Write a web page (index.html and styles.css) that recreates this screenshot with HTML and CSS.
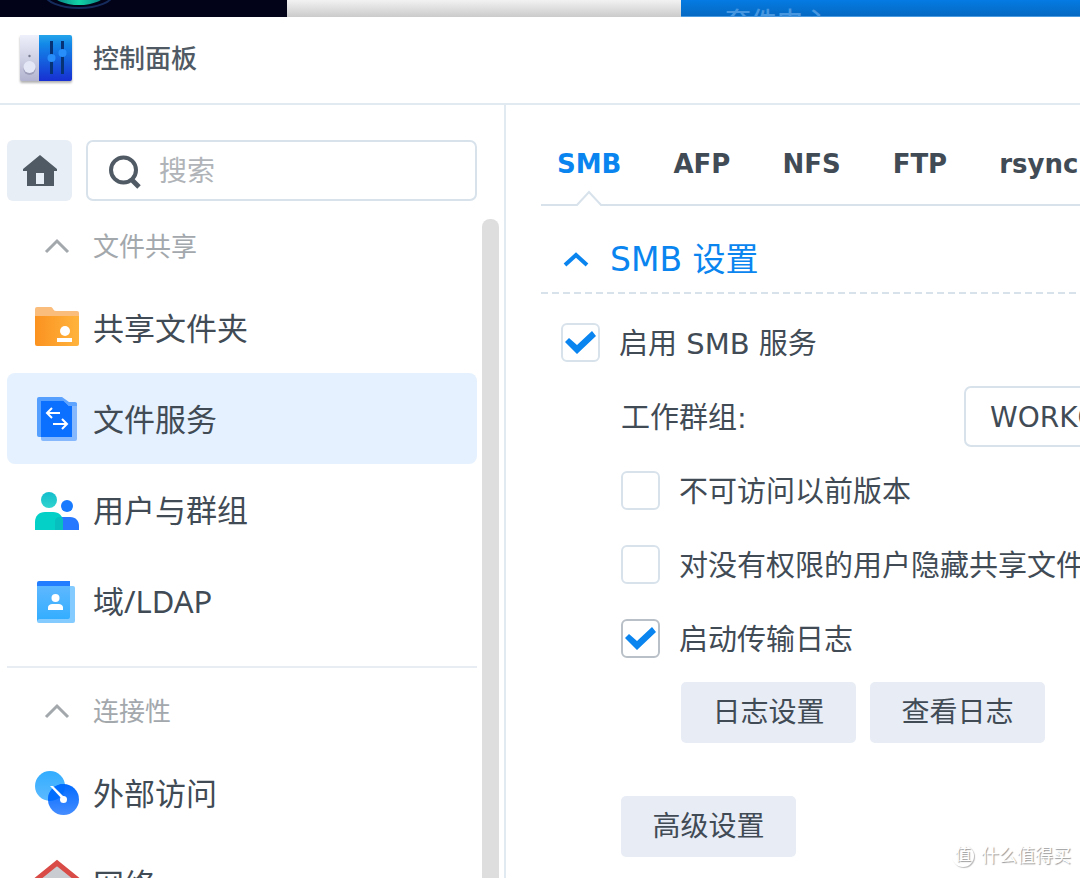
FILE: index.html
```html
<!DOCTYPE html>
<html lang="zh-CN">
<head>
    <meta charset="UTF-8">
    <meta name="viewport" content="width=device-width, initial-scale=1.0">
    <title>控制面板</title>
    <link rel="stylesheet" href="styles.css">
</head>
<body>

<div class="desktop">
    <div class="wallpaper">
        <svg width="287" height="17" viewBox="0 0 287 17">
            <defs>
                <linearGradient id="glow" x1="0" x2="1"><stop offset="0" stop-color="#087b82"/><stop offset=".5" stop-color="#12d3a5"/><stop offset="1" stop-color="#087b82"/></linearGradient>
            </defs>
            <ellipse cx="79" cy="-6" rx="34" ry="14" fill="none" stroke="#152b5c" stroke-width="2"/>
            <ellipse cx="79" cy="-6" rx="26" ry="11" fill="url(#glow)"/>
        </svg>
    </div>
    <div class="window-behind"></div>
    <div class="package-center">套件中心</div>
</div>

<div class="window">
    <header class="titlebar">
        <svg class="app-icon" width="54" height="54" viewBox="0 0 54 54">
            <defs>
                <linearGradient id="appLeft" x2="0" y2="1"><stop offset="0" stop-color="#eef0fb"/><stop offset="1" stop-color="#b2b3cf"/></linearGradient>
                <linearGradient id="appRight" x2="0" y2="1"><stop offset="0" stop-color="#25a5ea"/><stop offset=".2" stop-color="#1388e8"/><stop offset="1" stop-color="#172fd2"/></linearGradient>
            </defs>
            <path d="M1 3h20v46H3a2 2 0 0 1-2-2z" fill="url(#appLeft)"/>
            <path d="M20 3h31a2 2 0 0 1 2 2v42a2 2 0 0 1-2 2H20z" fill="url(#appRight)"/>
            <circle cx="10.500" cy="24" r="1.200" fill="#777b90"/>
            <circle cx="10.500" cy="37" r="6" fill="#9ea0bb"/>
            <circle cx="10.500" cy="35" r="6" fill="#e4e7f6"/>
            <path d="M32.500 9v33M43.500 9v33" stroke="#063276" stroke-width="3"/>
            <circle cx="32.500" cy="26" r="4" fill="#288ffa"/>
            <circle cx="43.500" cy="21" r="4" fill="#288ffa"/>
        </svg>
        <h1>控制面板</h1>
    </header>

    <div class="body">
        <aside class="sidebar">
            <div class="search-row">
                <button class="home" type="button" aria-label="主页">
                    <svg width="36" height="32" viewBox="0 0 36 32">
                        <path fill-rule="evenodd" fill="#505a64" d="M18 0L35 14v2h-3v15H5V16H1v-2zM14 18v11h8V18z"/>
                    </svg>
                </button>
                <label class="search">
                    <svg width="34" height="36" viewBox="0 0 34 36">
                        <circle cx="15.500" cy="16" r="12.500" fill="none" stroke="#505a64" stroke-width="4"/>
                        <path d="M24 26l7 7" stroke="#505a64" stroke-width="5"/>
                    </svg>
                    <input type="search" placeholder="搜索" aria-label="搜索">
                </label>
            </div>

            <div class="scroll-area">
                <nav class="nav">
                    <button class="group" type="button">
                        <svg width="44" height="24" viewBox="0 0 44 24"><path d="M11 18L22 7l11 11" fill="none" stroke="#a3a8ad" stroke-width="3"/></svg>
                        文件共享
                    </button>
                    <a class="item" href="#share">
                        <svg width="44" height="44" viewBox="0 0 44 44">
                            <defs><linearGradient id="folder"><stop offset="0" stop-color="#fb9220"/><stop offset="1" stop-color="#ffb43d"/></linearGradient></defs>
                            <path d="M0 3a2 2 0 0 1 2-2h14c2 0 2 4 5 4h21a2 2 0 0 1 2 2v6H0z" fill="#fbbd7c"/>
                            <path d="M0 10h44v28a2 2 0 0 1-2 2H2a2 2 0 0 1-2-2z" fill="url(#folder)"/>
                            <circle cx="30" cy="25" r="5" fill="#fff"/>
                            <path d="M22 32h15v4H22z" fill="#fff"/>
                        </svg>
                        共享文件夹
                    </a>
                    <a class="item active" href="#service">
                        <svg width="44" height="44" viewBox="0 0 44 44">
                            <path d="M2 2a2 2 0 0 1 2-2h22l10 8v32H4a2 2 0 0 1-2-2z" fill="#559fff"/>
                            <path d="M6 4h34a2 2 0 0 1 2 2v36a2 2 0 0 1-2 2H8a2 2 0 0 1-2-2z" fill="#86b8fd"/>
                            <path d="M26 0h16v6H34z" fill="#e5f1fe"/>
                            <path d="M6 4h23l5 5h3v31H6z" fill="#0b70ff"/>
                            <path d="M24 0h3l7 5h6a2 2 0 0 1 2 2v2h-8z" fill="#5fa5ff"/>
                            <path d="M25 16H12M17 11l-5 5 5 5M18 27h14M27 22l5 5-5 5" fill="none" stroke="#fff" stroke-width="2"/>
                        </svg>
                        文件服务
                    </a>
                    <a class="item" href="#users">
                        <svg width="44" height="44" viewBox="0 0 44 44">
                            <defs><linearGradient id="user" x2="0" y2="1"><stop offset="0" stop-color="#13bdcc"/><stop offset="1" stop-color="#30d4ce"/></linearGradient></defs>
                            <circle cx="14" cy="12" r="8" fill="url(#user)"/>
                            <circle cx="32" cy="18" r="6" fill="#177aff"/>
                            <path d="M20 42V29h15c6 0 9 4 9 9v4z" fill="#2878ff"/>
                            <path d="M0 42V34c0-6 4-10 10-10h8c6 0 10 4 10 10v8z" fill="#04d0c8"/>
                            <path d="M20 42V34c0-3 1-5 6-5 1 1 2 3 2 5v8z" fill="#07bfbf"/>
                        </svg>
                        用户与群组
                    </a>
                    <a class="item" href="#ldap">
                        <svg width="44" height="44" viewBox="0 0 44 44">
                            <defs><linearGradient id="book" x2="0" y2="1"><stop offset="0" stop-color="#5eb8ff"/><stop offset="1" stop-color="#32adff"/></linearGradient></defs>
                            <path d="M2 4a2 2 0 0 1 2-2h31v10H2z" fill="#237dff"/>
                            <path d="M2 7h36a2 2 0 0 1 2 2v33a2 2 0 0 1-2 2H4a2 2 0 0 1-2-2z" fill="#84ccff"/>
                            <path d="M2 7h33v31a2 2 0 0 1-2 2H5a3 3 0 0 0-3 2z" fill="url(#book)"/>
                            <circle cx="20.500" cy="19" r="4" fill="#fff"/>
                            <path d="M13 31v-2c0-3 2-4 5-4h5c3 0 5 1 5 4v2z" fill="#fff"/>
                        </svg>
                        域/LDAP
                    </a>
                    <hr class="separator">
                    <button class="group" type="button">
                        <svg width="44" height="24" viewBox="0 0 44 24"><path d="M11 18L22 7l11 11" fill="none" stroke="#a3a8ad" stroke-width="3"/></svg>
                        连接性
                    </button>
                    <a class="item" href="#external">
                        <svg width="44" height="44" viewBox="0 0 44 44">
                            <defs>
                                <linearGradient id="dial" x2="0" y2="1"><stop offset="0" stop-color="#32adff"/><stop offset="1" stop-color="#5dbaff"/></linearGradient>
                                <linearGradient id="dial2" x2="0" y2="1"><stop offset="0" stop-color="#006aff"/><stop offset="1" stop-color="#468dff"/></linearGradient>
                                <clipPath id="overlap"><circle cx="15" cy="15" r="15"/></clipPath>
                            </defs>
                            <circle cx="15" cy="15" r="15" fill="url(#dial)"/>
                            <circle cx="28.500" cy="28.500" r="15.500" fill="url(#dial2)"/>
                            <circle cx="28.500" cy="28.500" r="15.500" fill="#006dff" clip-path="url(#overlap)"/>
                            <path d="M15 15l3 0 11 11-2 2z" fill="#fff"/>
                            <circle cx="28.500" cy="28.500" r="3.500" fill="#fff"/>
                        </svg>
                        外部访问
                    </a>
                    <a class="item" href="#network">
                        <svg width="44" height="44" viewBox="0 0 44 44" overflow="visible">
                            <path d="M22 1L5 15v28h34V15z" fill="#c9ccd0"/>
                            <path d="M1 18L22 1l21 17" fill="none" stroke="#d94b46" stroke-width="5"/>
                        </svg>
                        网络
                    </a>
                </nav>
                <div class="scrollbar"></div>
            </div>
        </aside>

        <main class="content">
            <nav class="tabs">
                <a class="tab current" href="#smb">SMB
                    <svg class="notch" width="28" height="16" viewBox="0 0 28 16">
                        <path d="M1 16v-2h1L14 2l12 12h1v2z" fill="#fff"/>
                        <path d="M0 15h2L14 2l12 13h2" fill="none" stroke="#d8e2eb" stroke-width="2"/>
                    </svg>
                </a>
                <a class="tab" href="#afp">AFP</a>
                <a class="tab" href="#nfs">NFS</a>
                <a class="tab" href="#ftp">FTP</a>
                <a class="tab" href="#rsync">rsync</a>
            </nav>

            <h2 class="section-title">
                <svg width="28" height="20" viewBox="0 0 28 20"><path d="M3 15L14 5l11 10" fill="none" stroke="#0a85f0" stroke-width="4"/></svg>
                SMB 设置
            </h2>

            <form class="settings">
                <label class="row"><input type="checkbox" checked><span>启用 SMB 服务</span></label>
                <div class="row indent">
                    <label class="field-label" for="workgroup">工作群组:</label>
                    <input class="field" type="text" id="workgroup" value="WORKGROUP">
                </div>
                <label class="row indent"><input type="checkbox"><span>不可访问以前版本</span></label>
                <label class="row indent"><input type="checkbox"><span>对没有权限的用户隐藏共享文件夹</span></label>
                <label class="row indent"><input class="focus" type="checkbox" checked><span>启动传输日志</span></label>
                <div class="row indent-more">
                    <button class="btn" type="button">日志设置</button>
                    <button class="btn" type="button">查看日志</button>
                </div>
                <div class="row indent last">
                    <button class="btn" type="button">高级设置</button>
                </div>
            </form>
        </main>
    </div>
</div>

<div class="watermark"><span class="badge">值</span>什么值得买</div>

</body>
</html>
```
FILE: styles.css
```css
* {
    box-sizing: border-box;
}

body {
    margin: 0;
    height: 100vh;
    overflow: hidden;
    display: flex;
    flex-direction: column;
    background: #fff;
    color: #414b55;
    font-family: "DejaVu Sans", "Noto Sans CJK SC", sans-serif;
    font-size: 28px;
    line-height: 36px;
}

button, input {
    font: inherit;
    color: inherit;
}

a {
    color: inherit;
    text-decoration: none;
}

svg {
    flex: none;
    display: block;
}

/* strip of the desktop above the window */
.desktop {
    display: flex;
    flex: none;
    height: 17px;
    overflow: hidden;
}

.wallpaper {
    width: 287px;
    background: #020318;
}

.window-behind {
    width: 394px;
    background: linear-gradient(#f2f2f2, #cbcbcb);
}

.package-center {
    flex: 1;
    padding: 9px 0 0 44px;
    background: linear-gradient(#057be3, #0569c2);
    border-bottom: 1px solid #4b9be0;
    color: #4797e0;
    font-size: 26px;
    font-weight: 500;
    line-height: 26px;
}

/* window */
.window {
    flex: 1;
    min-height: 0;
    display: flex;
    flex-direction: column;
}

.titlebar {
    flex: none;
    display: flex;
    align-items: center;
    gap: 20px;
    height: 88px;
    padding: 0 19px 2px;
    border-bottom: 2px solid #e1e9f1;
}

.app-icon {
    filter: drop-shadow(0 2px 1px rgba(0, 0, 0, 0.3));
}

.titlebar h1 {
    margin: 0;
    font-size: 26px;
    font-weight: 500;
    color: #505a64;
}

.body {
    flex: 1;
    min-height: 0;
    display: flex;
}

/* sidebar */
.sidebar {
    flex: none;
    width: 506px;
    padding: 35px 5px 0 7px;
    display: flex;
    flex-direction: column;
    border-right: 2px solid #e1e9f1;
}

.search-row {
    display: flex;
    gap: 14px;
    padding-right: 22px;
}

.home {
    width: 65px;
    height: 61px;
    padding: 0;
    display: flex;
    align-items: center;
    justify-content: center;
    border: 0;
    border-radius: 6px;
    background: #e8eef5;
}

.search {
    flex: 1;
    display: flex;
    align-items: center;
    gap: 17px;
    height: 61px;
    padding: 2px 20px 0;
    border: 2px solid #d8e2eb;
    border-radius: 7px;
}

.search input {
    width: 100%;
    min-width: 0;
    padding: 0;
    border: 0;
    outline: 0;
    background: none;
}

.search input::placeholder {
    color: #b0b4b8;
}

.scroll-area {
    flex: 1;
    min-height: 0;
    display: flex;
    gap: 5px;
    padding-top: 8px;
}

.nav {
    flex: 1;
    overflow: hidden;
    font-family: "Noto Sans", "Noto Sans CJK SC", sans-serif;
}

.scrollbar {
    width: 17px;
    margin-top: 10px;
    border-radius: 8px 8px 0 0;
    background: #dedede;
}

.group,
.item {
    display: flex;
    align-items: center;
    gap: 14px;
    width: 100%;
    padding: 0 28px;
}

.group {
    height: 73px;
    border: 0;
    background: none;
    color: #a3a8ad;
    font-size: 26px;
}

.item {
    height: 91px;
    border-radius: 8px;
    font-size: 31px;
}

.item.active {
    background: #e5f1fe;
}

.separator {
    margin: 20px 0 6px;
    border: 0;
    border-top: 2px solid #e8edf3;
}

/* content */
.content {
    flex: 1;
    min-width: 0;
    padding: 31px 0 0 35px;
    overflow: hidden;
}

.tabs {
    display: flex;
    gap: 52px;
    height: 70px;
    padding: 10px 0 0 16px;
    border-bottom: 2px solid #d8e2eb;
    font-size: 26px;
    font-weight: bold;
}

.tab.current {
    position: relative;
    color: #0a85f0;
}

.notch {
    position: absolute;
    left: 50%;
    bottom: -2px;
    margin-left: -14px;
}

.section-title {
    display: flex;
    align-items: center;
    gap: 20px;
    height: 88px;
    margin: 0;
    padding: 20px 0 0 21px;
    color: #0a85f0;
    font-size: 33px;
    font-weight: normal;
    background: repeating-linear-gradient(90deg, #d8e2eb 0 7px, transparent 7px 11px) 0 100% / 100% 2px no-repeat;
}

.settings {
    display: flex;
    flex-direction: column;
    gap: 13px;
    padding: 18px 0 0 20px;
    white-space: nowrap;
}

.row {
    display: flex;
    align-items: center;
    gap: 19px;
    height: 61px;
}

.row span,
.field-label {
    padding-top: 2px;
    font-size: 29px;
}

.indent {
    padding-left: 60px;
}

.indent-more {
    padding-left: 120px;
    gap: 14px;
}

.last {
    margin-top: 40px;
}

.field-label {
    flex: none;
    width: 324px;
}

.field {
    height: 61px;
    padding: 2px 24px 0;
    border: 2px solid #d8e2eb;
    border-radius: 7px;
}

input[type="checkbox"] {
    appearance: none;
    flex: none;
    display: grid;
    place-items: center;
    width: 39px;
    height: 39px;
    margin: 0;
    border: 2px solid #d8e2eb;
    border-radius: 6px;
    background: #fff;
}

input[type="checkbox"].focus {
    border-color: #b9c0c8;
}

input[type="checkbox"]:checked::before {
    content: "";
    width: 31px;
    height: 23px;
    background: #0a85f0;
    clip-path: polygon(0 11px, 4px 7px, 12px 14px, 27px 0, 31px 5px, 12px 23px);
}

.btn {
    width: 175px;
    height: 61px;
    padding: 0;
    border: 0;
    border-radius: 5px;
    background: #e8edf5;
}

.watermark {
    position: absolute;
    right: 9px;
    bottom: 9px;
    display: flex;
    align-items: center;
    gap: 7px;
    color: #fff;
    font-size: 18px;
    line-height: 26px;
    text-shadow: 1px 1px 1px #999;
}

.badge {
    width: 22px;
    height: 22px;
    border-radius: 50%;
    box-shadow: 1px 1px 1px #bbb;
    font-size: 16px;
    line-height: 20px;
    text-align: center;
}
```
